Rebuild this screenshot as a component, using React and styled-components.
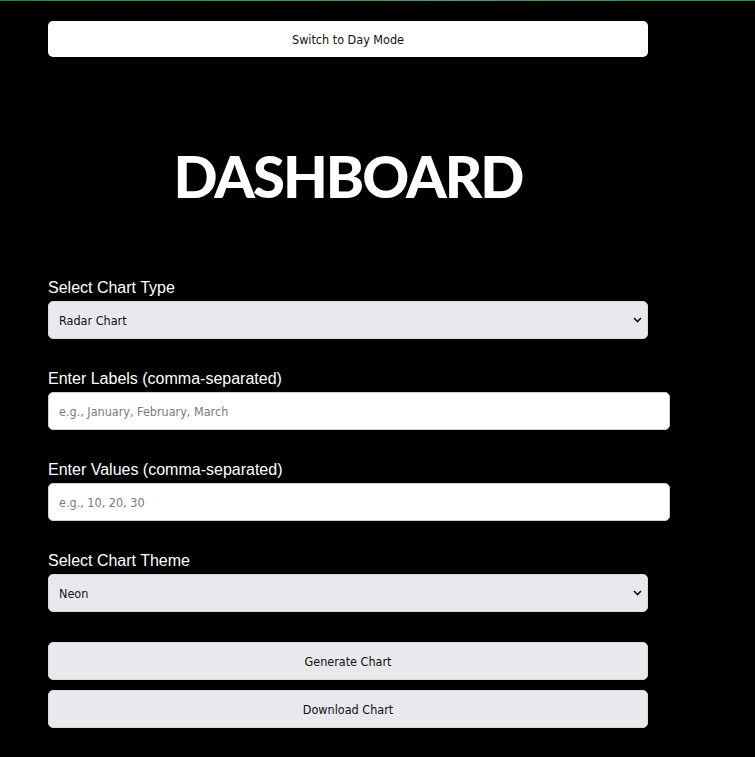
import React, { useState } from "react";
import styled, { createGlobalStyle } from "styled-components";

const UI_FONT = `"DejaVu Sans Condensed", "DejaVu Sans", sans-serif`;

const Global = createGlobalStyle`
  html, body {
    margin: 0;
    background: #000;
  }
  body {
    font-family: "Liberation Sans", Arial, sans-serif;
  }
`;

const Chevron = () => (
  <svg width="9" height="6" viewBox="0 0 9 6">
    <path d="M1 1 L4.5 4.5 L8 1" fill="none" stroke="#111" strokeWidth="1.6" />
  </svg>
);

const App = () => {
  const [chartType, setChartType] = useState("radar");
  const [theme, setTheme] = useState("neon");

  return (
    <Page>
      <Global />
      <TopLine />
      <Container>
        <ModeButton>Switch to Day Mode</ModeButton>
        <Title>DASHBOARD</Title>

        <Group>
          <Label>Select Chart Type</Label>
          <SelectWrap>
            <Select value={chartType} onChange={(e) => setChartType(e.target.value)}>
              <option value="bar">Bar Chart</option>
              <option value="line">Line Chart</option>
              <option value="pie">Pie Chart</option>
              <option value="radar">Radar Chart</option>
            </Select>
            <Arrow>
              <Chevron />
            </Arrow>
          </SelectWrap>
        </Group>

        <Group>
          <Label>Enter Labels (comma-separated)</Label>
          <Input placeholder="e.g., January, February, March" />
        </Group>

        <Group>
          <Label>Enter Values (comma-separated)</Label>
          <Input placeholder="e.g., 10, 20, 30" />
        </Group>

        <Group>
          <Label>Select Chart Theme</Label>
          <SelectWrap>
            <Select value={theme} onChange={(e) => setTheme(e.target.value)}>
              <option value="default">Default</option>
              <option value="pastel">Pastel</option>
              <option value="neon">Neon</option>
            </Select>
            <Arrow>
              <Chevron />
            </Arrow>
          </SelectWrap>
        </Group>

        <Actions>
          <ActionButton>Generate Chart</ActionButton>
          <ActionButton>Download Chart</ActionButton>
        </Actions>
      </Container>
    </Page>
  );
};

export default App;

const Page = styled.div`
  min-height: 757px;
  background: #000;
`;

const TopLine = styled.div`
  height: 1px;
  background: linear-gradient(90deg, #3d7a4c, #4f8a5c 30%, #6a8f72 60%, #3f7d4f);
`;

const Container = styled.div`
  width: 600px;
  margin-left: 48px;
  padding-top: 20px;
  display: flex;
  flex-direction: column;
`;

const ModeButton = styled.button`
  height: 36px;
  width: 100%;
  border: none;
  border-radius: 5px;
  background: #fff;
  color: #111;
  font-family: ${UI_FONT};
  font-size: 12.5px;
  cursor: pointer;
`;

const Title = styled.h1`
  margin: 90px 0 73px;
  font-family: Lato, "Open Sans", sans-serif;
  font-weight: 900;
  font-size: 58px;
  line-height: 1;
  color: #fff;
  text-align: center;
  letter-spacing: -2px;
`;

const Group = styled.div`
  display: flex;
  flex-direction: column;
  margin-bottom: 30px;
`;

const Label = styled.label`
  color: #fff;
  font-size: 16px;
  line-height: 19px;
  margin-bottom: 4px;
`;

const SelectWrap = styled.div`
  position: relative;
  width: 100%;
`;

const Select = styled.select`
  appearance: none;
  -webkit-appearance: none;
  width: 100%;
  height: 38px;
  box-sizing: border-box;
  padding: 0 10px;
  border: 1px solid #d8d8dc;
  border-radius: 5px;
  background: #e9e8ed;
  color: #111;
  font-family: ${UI_FONT};
  font-size: 12.5px;
  outline: none;
`;

const Arrow = styled.span`
  position: absolute;
  right: 6px;
  top: 16px;
  display: flex;
  pointer-events: none;
`;

const Input = styled.input`
  width: 100%;
  height: 16px;
  padding: 10px;
  border: 1px solid #d0d0d0;
  border-radius: 5px;
  background: #fff;
  color: #111;
  font-family: ${UI_FONT};
  font-size: 12.5px;
  outline: none;

  &::placeholder {
    color: #7a7a7a;
  }
`;

const Actions = styled.div`
  display: flex;
  flex-direction: column;
  gap: 10px;
`;

const ActionButton = styled.button`
  height: 38px;
  width: 100%;
  border: 1px solid #d8d8dc;
  border-radius: 5px;
  background: #e9e8ed;
  color: #111;
  font-family: ${UI_FONT};
  font-size: 12.5px;
  cursor: pointer;
`;
